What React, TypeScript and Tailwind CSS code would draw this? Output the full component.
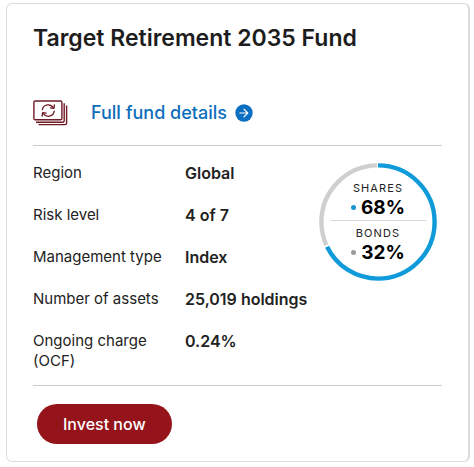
type Fact = { label: string; value: string };

const facts: Fact[] = [
  { label: "Region", value: "Global" },
  { label: "Risk level", value: "4 of 7" },
  { label: "Management type", value: "Index" },
  { label: "Number of assets", value: "25,019 holdings" },
  { label: "Ongoing charge (OCF)", value: "0.24%" },
];

function BanknotesIcon() {
  return (
    <svg width="36" height="26" viewBox="0 0 36 26" fill="none" stroke="#6f1a25" strokeWidth="1.4" aria-hidden="true">
      <rect x="0.9" y="1" width="28" height="18.8" rx="1.4" />
      <path d="M31.2 3.2V20.8Q31.2 22.2 29.8 22.2H3" />
      <path d="M33.6 5.4V23Q33.6 24.6 32 24.6H5.6" />
      <g strokeWidth="1.3" strokeLinecap="round" strokeLinejoin="round">
        <path d="M9.4 9.6A5.9 5.9 0 0 1 20.2 7.6" />
        <path d="M21.4 4.9L20.9 8.4L17.4 7.8" />
        <path d="M21.2 11.2A5.9 5.9 0 0 1 10.4 13.6" />
        <path d="M9.1 16.1L9.7 12.6L13.2 13.2" />
      </g>
    </svg>
  );
}

function ArrowBadge() {
  return (
    <svg width="18" height="18" viewBox="0 0 18 18" fill="none" aria-hidden="true">
      <circle cx="9" cy="9" r="8.7" fill="#0a6fc0" />
      <path d="M4.8 9H12.8M9 5.2L12.8 9L9 12.8" stroke="#fff" strokeWidth="1.2" strokeLinecap="round" strokeLinejoin="round" />
    </svg>
  );
}

function Share({ name, value, dot }: { name: string; value: string; dot: string }) {
  return (
    <div className="flex flex-col items-center">
      <span className="text-[11px] leading-4 tracking-widest">{name}</span>
      <span className="flex items-center gap-[5px] text-[19px] leading-6 font-bold text-black">
        <span className={`size-[5px] rounded-full ${dot}`} />
        {value}
      </span>
    </div>
  );
}

function AllocationChart() {
  return (
    <div className="grid shrink-0 place-items-center">
      <svg className="col-start-1 row-start-1" width="120" height="120" viewBox="0 0 120 120" fill="none" aria-hidden="true">
        <g strokeWidth="4.4" transform="rotate(-90 60 60)">
          <circle cx="60" cy="60" r="56.6" stroke="#cfcfcf" pathLength="100" strokeDasharray="31.4 68.6" strokeDashoffset="-68.3" />
          <circle cx="60" cy="60" r="56.6" stroke="#0f9ad9" pathLength="100" strokeDasharray="67.8 32.2" />
        </g>
      </svg>
      <div className="col-start-1 row-start-1 flex w-24 flex-col">
        <Share name="SHARES" value="68%" dot="bg-[#1a93d1]" />
        <hr className="mb-1 border-[#d8d8d8]" />
        <Share name="BONDS" value="32%" dot="bg-[#9a9a9a]" />
      </div>
    </div>
  );
}

export default function App() {
  return (
    <main className="bg-white py-[3px] pr-1 pl-[6px] font-['Inter','Liberation_Sans',sans-serif] text-[#222222]">
      <article className="rounded-md border border-r-2 border-[#dcdcdc] px-[26px] pt-5 pb-[17px]">
        <h1 className="text-[23px] leading-7 font-semibold text-[#1d1d1d]">Target Retirement 2035 Fund</h1>

        <div className="mt-[47px] flex items-center gap-[22px] border-b border-[#cccccc] pb-[18px]">
          <BanknotesIcon />
          <a href="#details" className="flex items-center gap-2 text-lg leading-7 font-medium text-[#0d6ebb]">
            Full fund details
            <ArrowBadge />
          </a>
        </div>

        <div className="flex items-start justify-between border-b border-[#cccccc] pt-4 pb-[14px]">
          <dl className="flex flex-col gap-[22px] pt-px leading-5">
            {facts.map((fact) => (
              <div key={fact.label} className="flex">
                <dt className="w-[152px] pr-4 text-[15px] leading-5">{fact.label}</dt>
                <dd className="text-base leading-5 font-semibold whitespace-nowrap">{fact.value}</dd>
              </div>
            ))}
          </dl>
          <div className="pr-1">
            <AllocationChart />
          </div>
        </div>

        <button type="button" className="mt-[18px] ml-1 h-10 rounded-full bg-[#95131b] px-[26px] text-base font-medium text-white">
          Invest now
        </button>
      </article>
    </main>
  );
}
